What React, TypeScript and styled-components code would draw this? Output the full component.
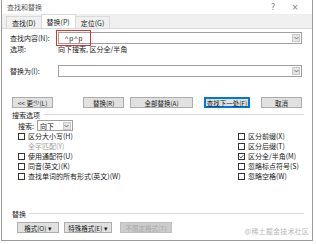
import React from "react";
import styled, { createGlobalStyle } from "styled-components";

const GlobalStyle = createGlobalStyle`
  html, body { margin: 0; padding: 0; background: #ffffff; }
  body { font-family: "Noto Sans CJK SC", "Noto Sans", sans-serif; }
`;

const Dialog = styled.div`
  width: 312px;
  height: 241px;
  margin-left: 1px;
  border: 1px solid #9a9a9a;
  border-top: none;
  background: #ffffff;
  display: flex;
  flex-direction: column;
  font-size: 7px;
  color: #1a1a1a;
  box-sizing: border-box;
  position: relative;
  overflow: hidden;
`;

const TitleBar = styled.div`
  height: 14px;
  display: flex;
  align-items: center;
  padding: 0 6px 0 5px;
  color: #555;
`;

const Title = styled.span`
  flex: 1;
  font-size: 7px;
`;

const TitleBtn = styled.span`
  width: 22px;
  text-align: center;
  color: #777;
  font-size: 8px;
  font-family: "DejaVu Sans", sans-serif;
`;

const TabStrip = styled.div`
  height: 14px;
  background: #f0f0f0;
  display: flex;
  align-items: flex-end;
  padding-left: 4px;
`;

const Tab = styled.div<{ $active?: boolean }>`
  height: ${(p) => (p.$active ? 13 : 11)}px;
  padding: 0 5px;
  display: flex;
  align-items: center;
  background: ${(p) => (p.$active ? "#ffffff" : "#f0f0f0")};
  border: 1px solid #d9d9d9;
  border-bottom: none;
  margin-right: -1px;
`;

const Panel = styled.div`
  flex: 1;
  display: flex;
  flex-direction: column;
  padding: 3px 8px 0 8px;
  border-top: 1px solid #d9d9d9;
`;

const FieldRow = styled.div<{ $mt?: number }>`
  display: flex;
  align-items: center;
  height: 12px;
  margin-top: ${(p) => p.$mt ?? 0}px;
`;

const Label = styled.div`
  width: 48px;
  flex-shrink: 0;
`;

const InputBox = styled.div`
  flex: 1;
  height: 12px;
  border: 1px solid #a0a0a0;
  box-sizing: border-box;
  display: flex;
  align-items: center;
  position: relative;
  padding-left: 6px;
  margin-right: 2px;
`;

const InputText = styled.span`
  flex: 1;
  font-family: "Liberation Sans", sans-serif;
  font-size: 7px;
  letter-spacing: 1px;
`;

const DropBtn = styled.div`
  width: 8px;
  height: 8px;
  margin-right: 1px;
  background: #e5e5e5;
  border: 1px solid #c8c8c8;
  box-sizing: border-box;
  display: flex;
  align-items: center;
  justify-content: center;
`;

const RedMark = styled.div`
  position: absolute;
  left: -3px;
  top: -3px;
  width: 35px;
  height: 16px;
  border: 1.5px solid #e0322f;
  box-sizing: border-box;
`;

const OptionsRow = styled.div`
  display: flex;
  height: 10px;
  align-items: center;
`;

const ButtonRow = styled.div`
  display: flex;
  align-items: center;
  margin-top: 20px;
  height: 11px;
  padding: 0 2px;
`;

const Button = styled.div<{ $w: number; $ml?: number; $focus?: boolean; $disabled?: boolean }>`
  width: ${(p) => p.$w}px;
  height: 11px;
  margin-left: ${(p) => p.$ml ?? 0}px;
  box-sizing: border-box;
  background: #e1e1e1;
  border: 1px solid ${(p) => (p.$focus ? "#0078d7" : "#adadad")};
  box-shadow: ${(p) => (p.$focus ? "inset 0 0 0 1px #0078d7" : "none")};
  display: flex;
  align-items: center;
  justify-content: center;
  color: ${(p) => (p.$disabled ? "#a8a8a8" : "#1a1a1a")};
  ${(p) => (p.$disabled ? "background: #cccccc; border-color: #bfbfbf;" : "")}
  white-space: nowrap;
  font-size: 6.5px;
`;

const SectionHead = styled.div<{ $mt?: number }>`
  display: flex;
  align-items: center;
  height: 9px;
  margin-top: ${(p) => p.$mt ?? 0}px;
  padding-left: 2px;
  &::after {
    content: "";
    flex: 1;
    height: 1px;
    background: #dcdcdc;
    margin-left: 3px;
  }
`;

const DirRow = styled.div`
  display: flex;
  align-items: center;
  height: 11px;
  padding-left: 8px;
  margin-top: 1px;
`;

const Select = styled.div`
  width: 36px;
  height: 11px;
  margin-left: 3px;
  border: 1px solid #a0a0a0;
  box-sizing: border-box;
  display: flex;
  align-items: center;
  padding-left: 2px;
  justify-content: space-between;
`;

const CheckGrid = styled.div`
  display: flex;
  justify-content: space-between;
  padding-left: 8px;
  margin-top: 0;
`;

const CheckCol = styled.div<{ $right?: boolean }>`
  display: flex;
  flex-direction: column;
  width: ${(p) => (p.$right ? "66px" : "auto")};
`;

const CheckRow = styled.div<{ $disabled?: boolean }>`
  display: flex;
  align-items: center;
  height: 10px;
  color: ${(p) => (p.$disabled ? "#a0a0a0" : "#1a1a1a")};
`;

const Box = styled.span<{ $hidden?: boolean }>`
  width: 7px;
  height: 7px;
  border: 1px solid ${(p) => (p.$hidden ? "transparent" : "#333")};
  box-sizing: border-box;
  margin-right: 3px;
  display: flex;
  align-items: center;
  justify-content: center;
  background: #fff;
`;

const BottomRow = styled.div`
  display: flex;
  align-items: center;
  height: 11px;
  margin-top: 4px;
  padding-left: 7px;
`;

const Watermark = styled.div`
  position: absolute;
  right: 3px;
  bottom: 4px;
  font-size: 7px;
  color: #b8b8b8;
  letter-spacing: 0.2px;
`;

const Arrow = () => (
  <svg width="5" height="4" viewBox="0 0 5 4">
    <path d="M0.5 1 L2.5 3 L4.5 1" fill="none" stroke="#555" strokeWidth="0.8" />
  </svg>
);

const Tick = () => (
  <svg width="5" height="5" viewBox="0 0 5 5">
    <path d="M0.6 2.6 L2 4 L4.4 1" fill="none" stroke="#333" strokeWidth="0.8" />
  </svg>
);

interface CheckItem {
  label: string;
  checked?: boolean;
  disabled?: boolean;
}

const leftChecks: CheckItem[] = [
  { label: "区分大小写(H)" },
  { label: "全字匹配(Y)", disabled: true },
  { label: "使用通配符(U)" },
  { label: "同音(英文)(K)" },
  { label: "查找单词的所有形式(英文)(W)" },
];

const rightChecks: CheckItem[] = [
  { label: "区分前缀(X)" },
  { label: "区分后缀(T)" },
  { label: "区分全/半角(M)", checked: true },
  { label: "忽略标点符号(S)" },
  { label: "忽略空格(W)" },
];

const Check: React.FC<{ item: CheckItem }> = ({ item }) => (
  <CheckRow $disabled={item.disabled}>
    <Box $hidden={item.disabled}>{item.checked && <Tick />}</Box>
    {item.label}
  </CheckRow>
);

export default function App() {
  return (
    <>
      <GlobalStyle />
      <Dialog>
        <TitleBar>
          <Title>查找和替换</Title>
          <TitleBtn>?</TitleBtn>
          <TitleBtn>×</TitleBtn>
        </TitleBar>
        <TabStrip>
          <Tab>查找(D)</Tab>
          <Tab $active>替换(P)</Tab>
          <Tab>定位(G)</Tab>
        </TabStrip>
        <Panel>
          <FieldRow>
            <Label>查找内容(N):</Label>
            <InputBox>
              <RedMark />
              <InputText>^p^p</InputText>
              <DropBtn>
                <Arrow />
              </DropBtn>
            </InputBox>
          </FieldRow>
          <OptionsRow>
            <Label>选项:</Label>
            <span>向下搜索, 区分全/半角</span>
          </OptionsRow>
          <FieldRow $mt={11}>
            <Label>替换为(I):</Label>
            <InputBox>
              <InputText />
              <DropBtn>
                <Arrow />
              </DropBtn>
            </InputBox>
          </FieldRow>
          <ButtonRow>
            <Button $w={42}>&lt;&lt; 更少(L)</Button>
            <Button $w={42} $ml={30}>替换(R)</Button>
            <Button $w={64} $ml={6}>全部替换(A)</Button>
            <Button $w={47} $ml={11} $focus>查找下一处(F)</Button>
            <Button $w={42} $ml={11}>取消</Button>
          </ButtonRow>
          <SectionHead $mt={2}>搜索选项</SectionHead>
          <DirRow>
            搜索:
            <Select>
              向下
              <DropBtn>
                <Arrow />
              </DropBtn>
            </Select>
          </DirRow>
          <CheckGrid>
            <CheckCol>
              {leftChecks.map((c) => (
                <Check key={c.label} item={c} />
              ))}
            </CheckCol>
            <CheckCol $right>
              {rightChecks.map((c) => (
                <Check key={c.label} item={c} />
              ))}
            </CheckCol>
          </CheckGrid>
          <SectionHead $mt={28}>替换</SectionHead>
          <BottomRow>
            <Button $w={42}>格式(O) ▾</Button>
            <Button $w={48} $ml={5}>特殊格式(E) ▾</Button>
            <Button $w={52} $ml={8} $disabled>不限定格式(T)</Button>
          </BottomRow>
        </Panel>
        <Watermark>@稀土掘金技术社区</Watermark>
      </Dialog>
    </>
  );
}
